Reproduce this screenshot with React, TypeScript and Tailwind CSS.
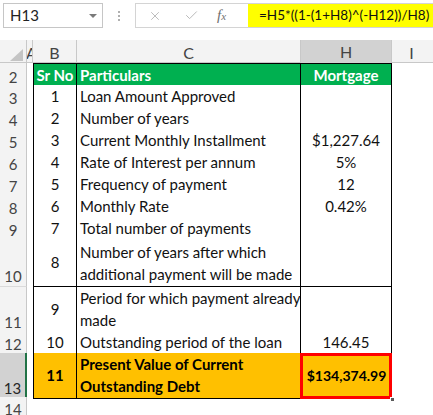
import { X, Check } from "lucide-react";

type Row = {
  n: number;
  h: string;
  sr?: string;
  text: string[];
  value?: string;
  kind?: "head" | "total";
};

const rows: Row[] = [
  { n: 2, h: "h-[22px]", sr: "Sr No", text: ["Particulars"], value: "Mortgage", kind: "head" },
  { n: 3, h: "h-[22px]", sr: "1", text: ["Loan Amount Approved"] },
  { n: 4, h: "h-[22px]", sr: "2", text: ["Number of years"] },
  { n: 5, h: "h-[22px]", sr: "3", text: ["Current Monthly Installment"], value: "$1,227.64" },
  { n: 6, h: "h-[22px]", sr: "4", text: ["Rate of Interest per annum"], value: "5%" },
  { n: 7, h: "h-[22px]", sr: "5", text: ["Frequency of payment"], value: "12" },
  { n: 8, h: "h-[22px]", sr: "6", text: ["Monthly Rate"], value: "0.42%" },
  { n: 9, h: "h-[22px]", sr: "7", text: ["Total number of payments"] },
  { n: 10, h: "h-[48px]", sr: "8", text: ["Number of years after which", "additional payment will be made"] },
  { n: 11, h: "h-[44px]", sr: "9", text: ["Period for which payment already", "made"] },
  { n: 12, h: "h-[22px]", sr: "10", text: ["Outstanding period of the loan"], value: "146.45" },
  { n: 13, h: "h-[44px]", sr: "11", text: ["Present Value of Current", "Outstanding Debt"], value: "$134,374.99", kind: "total" },
];

const cols = "grid grid-cols-[27px_6px_44px_224px_91px_1fr]";

function SheetRow({ r }: { r: Row }) {
  const head = r.kind === "head";
  const total = r.kind === "total";
  const fill = head ? "bg-[#00b050] text-white font-bold" : total ? "bg-[#ffc000] text-black font-bold" : "bg-white text-[#111]";
  const top = head ? "border-t" : "";
  return (
    <div className={`${cols} ${r.h}`}>
      <div
        className={`flex items-end justify-center pb-[1px] text-[15px] leading-[18px] ${
          total ? "bg-[#d2d2d2] border-r-2 border-r-[#217346] text-[#262626]" : "bg-[#f3f3f3] border-r border-r-[#c8c8c8] text-[#444]"
        } border-b border-b-[#dadada]`}
      >
        {r.n}
      </div>
      <div className="bg-white" />
      <div className={`flex items-center justify-center border-l border-r border-b border-black ${top} ${fill}`}>
        {r.sr}
      </div>
      <div className={`flex flex-col justify-end pl-[3px] pb-[1px] leading-[22px] border-r border-b border-black ${top} ${fill} whitespace-nowrap`}>
        {r.text.map((t) => (
          <span key={t}>{t}</span>
        ))}
      </div>
      {total ? (
        <div className={`relative flex items-center justify-center border-b border-black ${fill}`}>
          <div className="absolute left-[-1px] top-0 right-0 bottom-[-1px] border-[3px] border-[#ff0000]" />
          <div className="absolute right-[-3px] bottom-[-4px] w-[5px] h-[5px] bg-[#5a5a5a] border border-white" />
          <span className="relative text-[14px]">{r.value}</span>
        </div>
      ) : (
        <div className={`flex items-center justify-center border-r border-b border-black ${top} ${fill}`}>{r.value}</div>
      )}
      <div className="bg-white" />
    </div>
  );
}

export default function App() {
  return (
    <div className="w-[433px] h-[415px] overflow-hidden bg-white text-[15px]" style={{ fontFamily: "Lato, 'Open Sans', sans-serif" }}>
      {/* formula bar */}
      <div className="h-[40px] flex items-start pt-[3px]">
        <div className="shrink-0 ml-[3px] w-[100px] h-[25px] border border-[#c6c6c6] flex items-center justify-between pl-[6px] pr-[5px] text-[15px] text-[#222]">
          <span>H13</span>
          <span className="w-0 h-0 border-l-[4px] border-r-[4px] border-t-[4px] border-l-transparent border-r-transparent border-t-[#7a7a7a]" />
        </div>
        <div className="shrink-0 w-[32px] h-[25px] flex flex-col items-center justify-center gap-[2px]">
          <span className="w-[2px] h-[2px] bg-[#b0b0b0]" />
          <span className="w-[2px] h-[2px] bg-[#b0b0b0]" />
          <span className="w-[2px] h-[2px] bg-[#b0b0b0]" />
        </div>
        <div className="shrink-0 w-[113px] h-[25px] border border-[#d4d4d4] border-r-0 flex items-center">
          <X className="ml-[12px] w-[14px] h-[14px] text-[#b4b4b4]" strokeWidth={1.5} />
          <Check className="ml-[22px] w-[15px] h-[15px] text-[#b4b4b4]" strokeWidth={1.5} />
          <span className="ml-[18px] italic text-[#6f6f6f] text-[15px]" style={{ fontFamily: "'Liberation Serif', serif" }}>
            f<span className="text-[11px]">x</span>
          </span>
        </div>
        <div className="flex-1 min-w-0 h-[25px] bg-[#ffff00] border-t border-b border-[#d4d4d4] flex items-center pl-[11px] text-[13.5px] text-[#111] whitespace-nowrap overflow-hidden">
          =H5*((1-(1+H8)^(-H12))/H8)
        </div>
      </div>

      {/* column headers */}
      <div className={`${cols} h-[23px] text-[16px] text-[#444] bg-[#f3f3f3] border-b border-[#c8c8c8]`}>
        <div className="relative border-r border-[#c8c8c8]">
          <svg className="absolute right-[3px] bottom-[5px]" width="13" height="12" viewBox="0 0 13 12">
            <polygon points="13,0 13,12 0,12" fill="#c4c4c4" />
          </svg>
        </div>
        <div className="flex items-center overflow-hidden border-r border-[#c8c8c8]">
          <span className="-ml-[1px]">A</span>
        </div>
        <div className="flex items-center justify-center border-r border-[#c8c8c8]">B</div>
        <div className="flex items-center justify-center border-r border-[#c8c8c8]">C</div>
        <div className="flex items-center justify-center bg-[#d2d2d2] border-r border-[#c8c8c8] border-b-2 border-b-[#217346]">H</div>
        <div className="flex items-center justify-center pr-[2px]">I</div>
      </div>

      {rows.map((r) => (
        <SheetRow key={r.n} r={r} />
      ))}

      <div className={`${cols} h-[22px]`}>
        <div className="flex items-end justify-center pb-[1px] text-[15px] leading-[18px] bg-[#f3f3f3] border-r border-[#c8c8c8] text-[#444]">14</div>
      </div>
    </div>
  );
}
